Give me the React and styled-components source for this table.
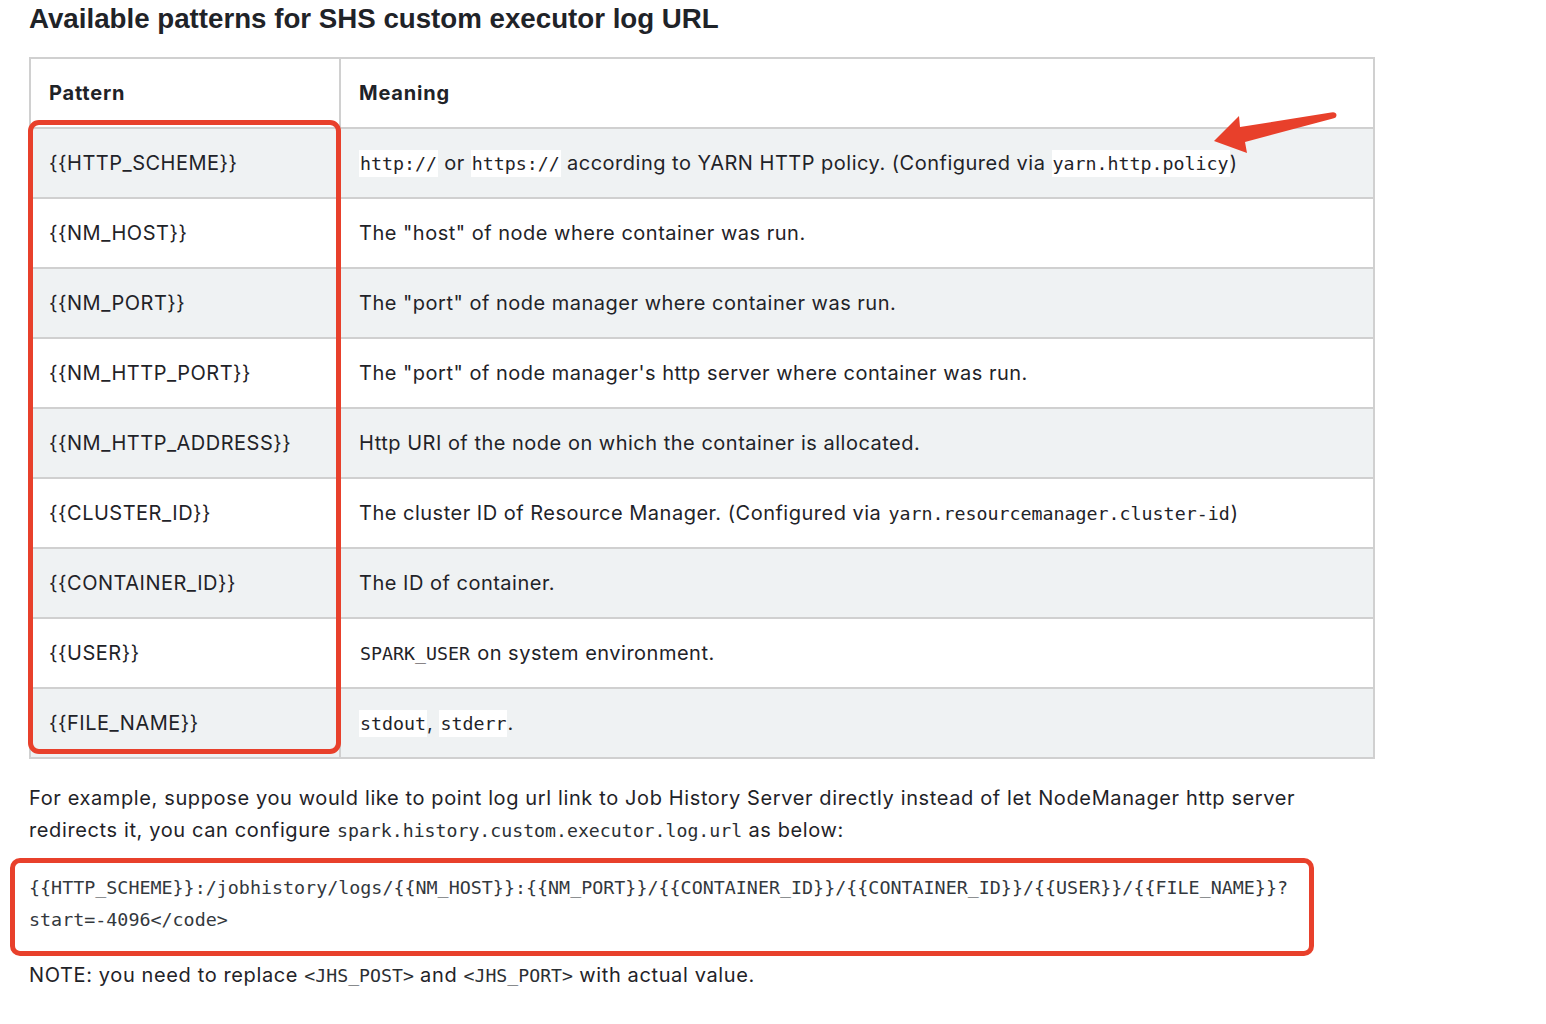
import * as React from 'react';
import styled, { createGlobalStyle } from 'styled-components';

const RED = '#e8402b';
const INK = '#1f2328';

const GlobalStyle = createGlobalStyle`
	html, body {
		margin: 0;
		padding: 0;
		background: #fff;
	}
	body {
		font-family: Inter, "Liberation Sans", Arial, sans-serif;
		color: ${INK};
	}
`;

const Page = styled.div`
	position: relative;
	width: 1346px;
	padding: 3px 29px 0;
`;

const Heading = styled.h2`
	margin: 0;
	font-family: "Liberation Sans", Arial, sans-serif;
	font-size: 27.7px;
	line-height: 32px;
	font-weight: 700;
`;

const Table = styled.table`
	margin-top: 22px;
	width: 1346px;
	border-collapse: collapse;
	border: 2px solid #d0d0d0;
	font-size: 20px;
	letter-spacing: 0.5px;

	th,
	td {
		height: 68px;
		padding: 0 18px;
		border: 2px solid #d0d0d0;
		text-align: left;
		vertical-align: middle;
		white-space: nowrap;
	}

	th {
		font-weight: 700;
		letter-spacing: 0.8px;
		background: #fff;
	}

	th:first-child,
	td:first-child {
		width: 272px;
	}
`;

const Row = styled.tr`
	background: ${({ $shaded }) => ($shaded ? '#eff2f3' : '#fff')};
`;

const Code = styled.code`
	font-family: "DejaVu Sans Mono", "Liberation Mono", monospace;
	font-size: 18.3px;
	letter-spacing: 0;
	background: ${({ $plain }) => ($plain ? 'transparent' : '#fff')};
	padding: 3px 1px;
`;

const Paragraph = styled.p`
	margin: ${({ $top }) => $top}px 0 0;
	font-size: 20px;
	letter-spacing: 0.62px;
	line-height: 32px;
`;

const SmallCode = styled.code`
	font-family: "DejaVu Sans Mono", "Liberation Mono", monospace;
	font-size: 18.2px;
	letter-spacing: 0;
	color: #2b2f33;
`;

const CodeBlock = styled.pre`
	margin: 11px 0 0 -19px;
	width: 1280px;
	box-sizing: content-box;
	padding: 9px 0 15px 14px;
	border: 5px solid ${RED};
	border-radius: 10px;
	font-family: "DejaVu Sans Mono", "Liberation Mono", monospace;
	font-size: 18.35px;
	line-height: 32px;
	color: #33383d;
	white-space: pre;
`;

const Highlight = styled.div`
	position: absolute;
	left: 28px;
	top: 120px;
	width: 313px;
	height: 634px;
	box-sizing: border-box;
	border: 5.5px solid ${RED};
	border-radius: 11px;
	pointer-events: none;
`;

const Arrow = styled.svg`
	position: absolute;
	left: 1200px;
	top: 100px;
	overflow: visible;
`;

const rows = [
	{
		pattern: '{{HTTP_SCHEME}}',
		meaning: (
			<>
				<Code>http://</Code> or <Code>https://</Code> according to YARN HTTP policy. (Configured via{' '}
				<Code>yarn.http.policy</Code>)
			</>
		),
	},
	{ pattern: '{{NM_HOST}}', meaning: 'The "host" of node where container was run.' },
	{ pattern: '{{NM_PORT}}', meaning: 'The "port" of node manager where container was run.' },
	{ pattern: '{{NM_HTTP_PORT}}', meaning: 'The "port" of node manager\'s http server where container was run.' },
	{ pattern: '{{NM_HTTP_ADDRESS}}', meaning: 'Http URI of the node on which the container is allocated.' },
	{
		pattern: '{{CLUSTER_ID}}',
		meaning: (
			<>
				The cluster ID of Resource Manager. (Configured via <Code $plain>yarn.resourcemanager.cluster-id</Code>)
			</>
		),
	},
	{ pattern: '{{CONTAINER_ID}}', meaning: 'The ID of container.' },
	{
		pattern: '{{USER}}',
		meaning: (
			<>
				<Code $plain>SPARK_USER</Code> on system environment.
			</>
		),
	},
	{
		pattern: '{{FILE_NAME}}',
		meaning: (
			<>
				<Code>stdout</Code>, <Code>stderr</Code>.
			</>
		),
	},
];

export default function App() {
	return (
		<>
			<GlobalStyle />
			<Page>
				<Heading>Available patterns for SHS custom executor log URL</Heading>
				<Table>
					<thead>
						<tr>
							<th>Pattern</th>
							<th>Meaning</th>
						</tr>
					</thead>
					<tbody>
						{rows.map((row, i) => (
							<Row key={row.pattern} $shaded={i % 2 === 0}>
								<td>{row.pattern}</td>
								<td>{row.meaning}</td>
							</Row>
						))}
					</tbody>
				</Table>
				<Paragraph $top={23}>
					For example, suppose you would like to point log url link to Job History Server directly instead of let
					NodeManager http server redirects it, you can configure <SmallCode>spark.history.custom.executor.log.url</SmallCode>{' '}
					as below:
				</Paragraph>
				<CodeBlock>
					{'{{HTTP_SCHEME}}:/jobhistory/logs/{{NM_HOST}}:{{NM_PORT}}/{{CONTAINER_ID}}/{{CONTAINER_ID}}/{{USER}}/{{FILE_NAME}}?\nstart=-4096</code>'}
				</CodeBlock>
				<Paragraph $top={3}>
					NOTE: you need to replace <SmallCode>&lt;JHS_POST&gt;</SmallCode> and <SmallCode>&lt;JHS_PORT&gt;</SmallCode>{' '}
					with actual value.
				</Paragraph>

				<Highlight />
				<Arrow width="140" height="60" viewBox="1200 100 140 60">
					<path
						d="M1214 141 L1239 116 L1240 127 L1331 112.5 Q1336 111.5 1336.5 115 Q1336.5 118 1333 118.5 L1245 142 L1247 153 Z"
						fill={RED}
					/>
				</Arrow>
			</Page>
		</>
	);
}
